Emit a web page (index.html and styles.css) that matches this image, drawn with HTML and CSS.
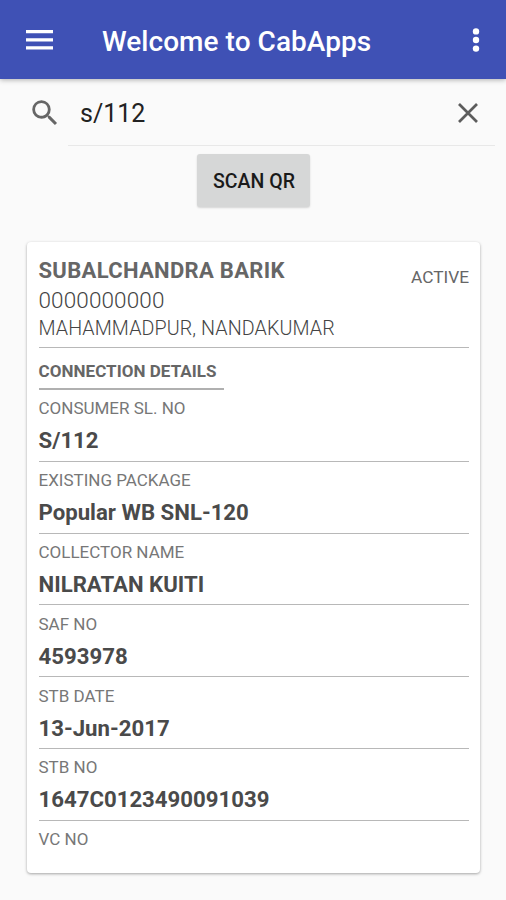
FILE: index.html
```html
<!DOCTYPE html>
<html>
<head>
    <meta charset="utf-8">
    <title>CabApps</title>
    <link rel="stylesheet" href="styles.css">
</head>
<body>
    <header class="toolbar">
        <svg class="menu-icon" width="27" height="20" viewBox="0 0 27 20">
            <path d="M0 0h27v3.2H0zM0 8.2h27v3.2H0zM0 16.3h27v3.2H0z" fill="#fff"/>
        </svg>
        <h1 class="toolbar-title">Welcome to CabApps</h1>
        <svg class="more-icon" width="8" height="24" viewBox="0 0 8 24" fill="#fff">
            <circle cx="4" cy="3.4" r="3.2"/>
            <circle cx="4" cy="12" r="3.2"/>
            <circle cx="4" cy="20.6" r="3.2"/>
        </svg>
    </header>

    <div class="search">
        <svg class="search-icon" width="34" height="34" viewBox="0 0 24 24">
            <path d="M15.5 14h-.79l-.28-.27A6.471 6.471 0 0 0 16 9.5 6.5 6.5 0 1 0 9.5 16c1.61 0 3.09-.59 4.23-1.57l.27.28v.79l5 4.99L20.49 19l-4.99-5zm-6 0C7.01 14 5 11.99 5 9.5S7.01 5 9.5 5 14 7.01 14 9.5 11.99 14 9.5 14z" fill="#666"/>
        </svg>
        <div class="search-field">
            <span class="search-text">s/112</span>
            <svg width="20" height="20" viewBox="0 0 20 20">
                <path d="M1 1l18 18M19 1L1 19" stroke="#5c5c5c" stroke-width="2.7" fill="none"/>
            </svg>
        </div>
    </div>

    <button class="scan-button">SCAN QR</button>

    <main class="card">
        <div class="customer">
            <div>
                <div class="name">SUBALCHANDRA BARIK</div>
                <div class="phone">0000000000</div>
                <div class="address">MAHAMMADPUR, NANDAKUMAR</div>
            </div>
            <div class="status">ACTIVE</div>
        </div>
        <div class="section-title">CONNECTION DETAILS</div>
        <div class="row">
            <div class="label">CONSUMER SL. NO</div>
            <div class="value">S/112</div>
        </div>
        <div class="row">
            <div class="label">EXISTING PACKAGE</div>
            <div class="value">Popular WB SNL-120</div>
        </div>
        <div class="row">
            <div class="label">COLLECTOR NAME</div>
            <div class="value">NILRATAN KUITI</div>
        </div>
        <div class="row">
            <div class="label">SAF NO</div>
            <div class="value">4593978</div>
        </div>
        <div class="row">
            <div class="label">STB DATE</div>
            <div class="value">13-Jun-2017</div>
        </div>
        <div class="row">
            <div class="label">STB NO</div>
            <div class="value">1647C0123490091039</div>
        </div>
        <div class="row">
            <div class="label">VC NO</div>
        </div>
    </main>
</body>
</html>
```

FILE: styles.css
```css
* {
    box-sizing: border-box;
}

body {
    margin: 0;
    height: 900px;
    overflow: hidden;
    background: #fafafa;
    font-family: Roboto, "Liberation Sans", sans-serif;
    color: #666;
}

.toolbar {
    display: flex;
    align-items: center;
    height: 79px;
    padding: 0 26px 0 26px;
    background: #3f51b5;
    box-shadow: 0 1px 5px rgba(0, 0, 0, 0.3);
}

.toolbar-title {
    flex: 1;
    margin: 4px 0 0 49px;
    font-size: 28px;
    font-weight: 500;
    letter-spacing: 0.05px;
    color: #fff;
}

.search {
    display: flex;
    height: 67px;
    padding: 0 11px 0 28px;
}

.search-icon {
    margin-top: 17px;
}

.search-field {
    display: flex;
    flex: 1;
    justify-content: space-between;
    align-items: center;
    margin-left: 6px;
    padding: 1px 17.5px 0 12px;
    border-bottom: 1px solid #e8e8e8;
}

.search-text {
    margin-top: 2px;
    font-size: 25px;
    color: #222;
}

.scan-button {
    display: block;
    width: 113px;
    height: 53px;
    margin: 8px 0 0 197px;
    padding: 2px 0 0 1px;
    border: none;
    border-radius: 3px;
    background: #d6d7d7;
    box-shadow: 0 1px 2px rgba(0, 0, 0, 0.15);
    font-family: inherit;
    font-size: 19.5px;
    font-weight: 500;
    color: #1a1a1a;
}

.card {
    width: 453px;
    height: 631px;
    margin: 35px 0 0 27px;
    padding: 12px 11px 0 11.5px;
    border-radius: 4px;
    background: #fff;
    box-shadow: 0 1px 3px rgba(0, 0, 0, 0.35);
    white-space: nowrap;
}

.customer {
    display: flex;
    justify-content: space-between;
    height: 94px;
    border-bottom: 1px solid #b8b8b8;
}

.name {
    font-size: 22px;
    font-weight: 700;
    letter-spacing: 0.32px;
    line-height: 33px;
}

.phone {
    font-size: 22.5px;
    font-weight: 300;
    letter-spacing: 0.12px;
    line-height: 27px;
    color: #444;
}

.address {
    font-size: 19.7px;
    font-weight: 300;
    letter-spacing: 0.08px;
    line-height: 29px;
    color: #444;
}

.status {
    margin-top: 11px;
    font-size: 17.3px;
    line-height: 24px;
}

.section-title {
    width: 185px;
    height: 42px;
    padding-top: 11px;
    border-bottom: 2px solid #b0b0b0;
    font-size: 17px;
    font-weight: 700;
    letter-spacing: 0.05px;
    line-height: 24px;
}

.row {
    height: 71.8px;
    padding-top: 7.4px;
    border-bottom: 1px solid #b8b8b8;
}

.row:last-child {
    border-bottom: none;
}

.label {
    font-size: 17px;
    line-height: 22px;
    color: #777;
}

.value {
    font-size: 22.2px;
    font-weight: 700;
    line-height: 43px;
    color: #4a4a4a;
}
```
